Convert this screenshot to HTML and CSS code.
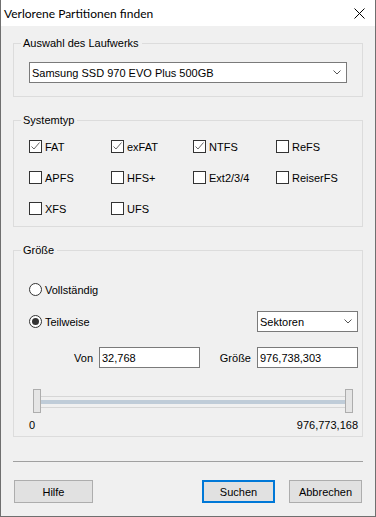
FILE: index.html
```html
<!DOCTYPE html>
<html lang="de">
<head>
    <meta charset="UTF-8">
    <meta name="viewport" content="width=device-width, initial-scale=1.0">
    <title>Verlorene Partitionen finden</title>
    <link rel="stylesheet" href="styles.css">
</head>
<body>

<div class="window">
    <div class="titlebar">
        <span class="title">Verlorene Partitionen finden</span>
        <svg class="close" width="11" height="11" viewBox="0 0 11 11">
            <path d="M0.5 0.5L10.5 10.5M10.5 0.5L0.5 10.5" stroke="#000" stroke-width="1"/>
        </svg>
    </div>

    <div class="content">
        <!-- Laufwerk -->
        <fieldset class="group drive-group">
            <legend>Auswahl des Laufwerks</legend>
            <div class="combo combo-drive">
                <span>Samsung SSD 970 EVO Plus 500GB</span>
                <svg width="8" height="5" viewBox="0 0 8 5"><path d="M0.5 0.5L4 4L7.5 0.5" fill="none" stroke="#555" stroke-width="1"/></svg>
            </div>
        </fieldset>

        <!-- Systemtyp -->
        <fieldset class="group type-group">
            <legend>Systemtyp</legend>
            <div class="check-grid">
                <label class="check"><span class="box"><svg width="11" height="11" viewBox="0 0 11 11"><path d="M1.5 5.5L4 8L9.5 1.5" fill="none" stroke="#666" stroke-width="1"/></svg></span>FAT</label>
                <label class="check"><span class="box"><svg width="11" height="11" viewBox="0 0 11 11"><path d="M1.5 5.5L4 8L9.5 1.5" fill="none" stroke="#666" stroke-width="1"/></svg></span>exFAT</label>
                <label class="check"><span class="box"><svg width="11" height="11" viewBox="0 0 11 11"><path d="M1.5 5.5L4 8L9.5 1.5" fill="none" stroke="#666" stroke-width="1"/></svg></span>NTFS</label>
                <label class="check"><span class="box"></span>ReFS</label>
                <label class="check"><span class="box"></span>APFS</label>
                <label class="check"><span class="box"></span>HFS+</label>
                <label class="check"><span class="box"></span>Ext2/3/4</label>
                <label class="check"><span class="box"></span>ReiserFS</label>
                <label class="check"><span class="box"></span>XFS</label>
                <label class="check"><span class="box"></span>UFS</label>
            </div>
        </fieldset>

        <!-- Groesse -->
        <fieldset class="group size-group">
            <legend>Größe</legend>
            <div class="radio-row">
                <span class="radio"></span>Vollständig
            </div>
            <div class="radio-row partial-row">
                <span class="radio selected"></span>Teilweise
                <div class="combo combo-unit">
                    <span>Sektoren</span>
                    <svg width="8" height="5" viewBox="0 0 8 5"><path d="M0.5 0.5L4 4L7.5 0.5" fill="none" stroke="#555" stroke-width="1"/></svg>
                </div>
            </div>
            <div class="range-row">
                <label class="range-label first">Von</label>
                <input type="text" value="32,768">
                <label class="range-label">Größe</label>
                <input type="text" value="976,738,303">
            </div>
            <div class="slider">
                <span class="thumb"></span>
                <div class="track"><div class="band"></div></div>
                <span class="thumb"></span>
            </div>
            <div class="slider-labels">
                <span>0</span>
                <span>976,773,168</span>
            </div>
        </fieldset>

        <hr class="separator">

        <div class="buttons">
            <button type="button" class="btn">Hilfe</button>
            <span class="spacer"></span>
            <button type="button" class="btn default">Suchen</button>
            <button type="button" class="btn">Abbrechen</button>
        </div>
    </div>
</div>

</body>
</html>
```

FILE: styles.css
```css
body {
    margin: 0;
    font-family: "Liberation Sans", Arial, sans-serif;
    font-size: 11px;
    color: #000;
}
.window {
    width: 376px;
    height: 517px;
    box-sizing: border-box;
    background: #f0f0f0;
    border: 1px solid #6f6f6f;
    border-top: none;
}
.titlebar {
    height: 26px;
    background: #fff;
    display: flex;
    align-items: center;
    justify-content: space-between;
    padding: 0 10px 0 3px;
}
.title {
    font-family: Lato, sans-serif;
    font-size: 12px;
    margin-top: 1px;
}
.close {
    margin-top: 1px;
}
.content {
    padding: 11px 12px 0;
}
.group {
    margin: 0 0 17px;
    padding: 12px 15px 13px;
    border: 1px solid #dcdcdc;
    min-width: 0;
}
.group legend {
    margin-left: -8px;
    padding: 0 3px 0 2px;
    line-height: 13px;
}
.combo {
    height: 21px;
    box-sizing: border-box;
    background: #fff;
    border: 1px solid #7a7a7a;
    display: flex;
    align-items: center;
    justify-content: space-between;
    padding: 0 5px 0 2px;
}
.type-group {
    padding-top: 13px;
    padding-bottom: 11px;
}
.check-grid {
    display: grid;
    grid-template-columns: 82px 82px 83px 82px;
    row-gap: 18px;
}
.check {
    display: flex;
    align-items: center;
    gap: 3px;
    height: 13px;
}
.box {
    width: 13px;
    height: 13px;
    box-sizing: border-box;
    border: 1px solid #333;
    background: #fff;
    display: flex;
}
.size-group {
    padding: 26px 4px 4px 15px;
    margin-bottom: 0;
}
.radio-row {
    display: flex;
    align-items: center;
    gap: 3px;
    height: 13px;
}
.radio {
    width: 13px;
    height: 13px;
    box-sizing: border-box;
    border: 1px solid #333;
    border-radius: 50%;
    background: #fff;
    display: flex;
    align-items: center;
    justify-content: center;
}
.radio.selected::after {
    content: "";
    width: 7px;
    height: 7px;
    border-radius: 50%;
    background: #333;
}
.partial-row {
    margin-top: 15px;
    height: 21px;
}
.combo-unit {
    width: 101px;
    margin-left: auto;
}
.range-row {
    margin-top: 15px;
    display: flex;
    align-items: center;
    height: 21px;
}
.range-label {
    flex: 1;
    text-align: right;
    margin-right: 6px;
}
.range-label.first {
    flex: none;
    width: 64px;
}
.range-row input {
    width: 101px;
    height: 21px;
    box-sizing: border-box;
    border: 1px solid #7a7a7a;
    padding: 0 2px;
    font-family: inherit;
    font-size: 11px;
    background: #fff;
    outline: none;
}
.slider {
    margin-top: 21px;
    height: 24px;
    display: flex;
    align-items: flex-start;
    padding: 0 5px 0 4px;
}
.thumb {
    width: 8px;
    height: 24px;
    box-sizing: border-box;
    background: #e5e5e5;
    border: 1px solid #adadad;
}
.track {
    flex: 1;
    margin-top: 7px;
    height: 12px;
    box-sizing: border-box;
    border-top: 1px solid #d6d6d6;
    border-bottom: 1px solid #d6d6d6;
    padding: 3px 0;
}
.band {
    height: 4px;
    background: #bfccd8;
}
.slider-labels {
    display: flex;
    justify-content: space-between;
    margin-top: 6px;
    line-height: 13px;
}
.separator {
    margin: 24px 0 0;
    border: none;
    border-top: 1px solid #a0a0a0;
    height: 0;
}
.buttons {
    display: flex;
    margin-top: 18px;
    padding: 0 1px;
    gap: 14px;
}
.spacer {
    flex: 1;
}
.btn {
    width: 73px;
    height: 23px;
    background: #e1e1e1;
    border: 1px solid #adadad;
    font-family: inherit;
    font-size: 11px;
    color: #000;
    padding: 0;
}
.btn:first-child {
    width: 79px;
}
.btn.default {
    border: 2px solid #0078d7;
}
```
